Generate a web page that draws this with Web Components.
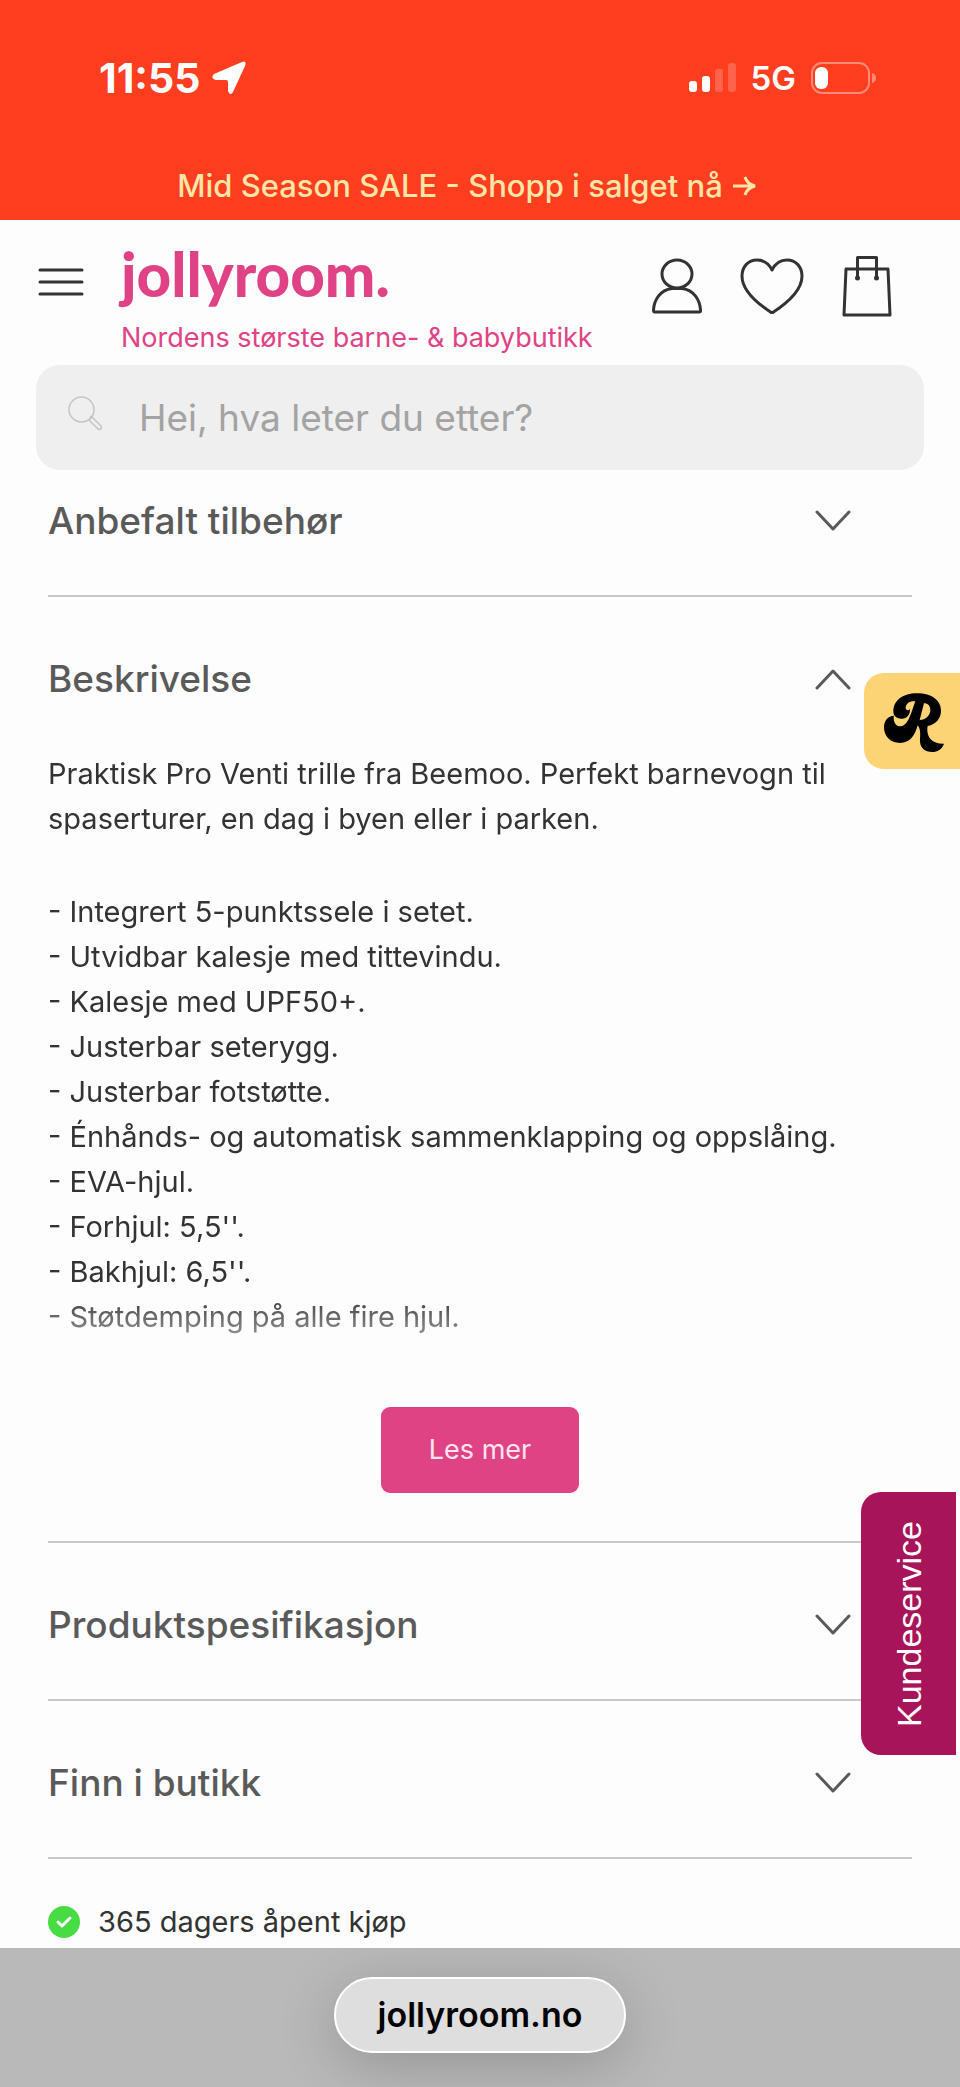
<!DOCTYPE html>
<html lang="no">
<head>
<meta charset="utf-8">
<meta name="viewport" content="width=device-width, initial-scale=1">
<title>Jollyroom</title>
<style>
  body {
    margin: 0;
    background: #fdfdfd;
    color: #333;
    font-family: Inter, "Liberation Sans", sans-serif;
    font-size: 29px;
    line-height: 45px;
  }
  main {
    /* the page is scrolled a little under the header */
    margin-top: -31px;
    padding: 0 48px;
  }
  p, ul {
    margin: 0;
  }
  ul {
    margin-top: 48px;
    padding: 0;
    list-style: none;
  }
</style>
</head>
<body>
  <status-bar time="11:55" network="5G"></status-bar>
  <sale-banner href="#salg">Mid Season SALE - Shopp i salget nå</sale-banner>
  <shop-header tagline="Nordens største barne- &amp; babybutikk"></shop-header>

  <main>
    <accordion-item heading="Anbefalt tilbehør"></accordion-item>
    <accordion-item heading="Beskrivelse" open>
      <read-more label="Les mer">
        <p>Praktisk Pro Venti trille fra Beemoo. Perfekt barnevogn til spaserturer, en dag i byen eller i parken.</p>
        <ul>
          <li>- Integrert 5-punktssele i setet.</li>
          <li>- Utvidbar kalesje med tittevindu.</li>
          <li>- Kalesje med UPF50+.</li>
          <li>- Justerbar seterygg.</li>
          <li>- Justerbar fotstøtte.</li>
          <li>- Énhånds- og automatisk sammenklapping og oppslåing.</li>
          <li>- EVA-hjul.</li>
          <li>- Forhjul: 5,5''.</li>
          <li>- Bakhjul: 6,5''.</li>
          <li>- Støtdemping på alle fire hjul.</li>
        </ul>
      </read-more>
    </accordion-item>
    <accordion-item heading="Produktspesifikasjon"></accordion-item>
    <accordion-item heading="Finn i butikk"></accordion-item>
    <usp-item>365 dagers åpent kjøp</usp-item>
  </main>

  <reward-tab></reward-tab>
  <service-tab>Kundeservice</service-tab>
  <address-bar>jollyroom.no</address-bar>

<script>
class StatusBar extends HTMLElement {
  constructor() {
    super();
    this.attachShadow({ mode: "open" });
  }

  connectedCallback() {
    this.shadowRoot.innerHTML = `
      <style>
        :host {
          display: flex;
          justify-content: space-between;
          align-items: center;
          padding: 54px 84px 0 99px;
          background: #ff3d1f;
          color: #fff;
          line-height: 48px;
        }
        div {
          display: flex;
          align-items: center;
        }
        .time {
          font-size: 41px;
          font-weight: 700;
          gap: 12px;
        }
        .signal {
          font-size: 33px;
          font-weight: 600;
          gap: 15px;
        }
      </style>
      <div class="time">
        <span>${this.getAttribute("time")}</span>
        <svg width="34" height="34" viewBox="0 0 34 34" fill="#fff"><path d="M30 1Q35 -1 33 5L21 31Q18 36 16 30V21Q16 19 14 19H4Q-2 17 2 13Z"/></svg>
      </div>
      <div class="signal">
        <svg width="47" height="30" viewBox="0 0 47 30" fill="#fff">
          <rect y="18" width="8" height="11" rx="3"/>
          <rect x="13" y="13" width="8" height="16" rx="3"/>
          <rect x="26" y="6" width="8" height="23" rx="3" opacity=".2"/>
          <rect x="39" y="0" width="8" height="29" rx="3" opacity=".2"/>
        </svg>
        <span>${this.getAttribute("network")}</span>
        <svg width="65" height="32" viewBox="0 0 65 32" fill="#fff">
          <rect x="1" y="1" width="57" height="30" rx="10" fill="none" stroke="#fff" stroke-width="2" opacity=".4"/>
          <path d="M61 11Q65 12 65 16T61 21Z" opacity=".4"/>
          <rect x="4" y="5" width="13" height="22" rx="6"/>
        </svg>
      </div>
    `;
  }
}
customElements.define("status-bar", StatusBar);

class SaleBanner extends HTMLElement {
  constructor() {
    super();
    this.attachShadow({ mode: "open" });
  }

  connectedCallback() {
    this.shadowRoot.innerHTML = `
      <style>
        :host {
          display: block;
          padding: 64px 26px 14px 0;
          background: #ff3d1f;
        }
        a {
          display: flex;
          align-items: center;
          justify-content: center;
          gap: 10px;
          color: #ffe5a6;
          font-size: 31px;
          font-weight: 500;
          line-height: 40px;
          text-decoration: none;
        }
      </style>
      <a href="${this.getAttribute("href")}">
        <slot></slot>
        <svg width="24" height="20" viewBox="0 0 24 20" fill="none" stroke="#ffe5a6" stroke-width="3"><path d="M0 10H21M12 1Q14 8 22 10Q14 12 12 19"/></svg>
      </a>
    `;
  }
}
customElements.define("sale-banner", SaleBanner);

class ShopHeader extends HTMLElement {
  constructor() {
    super();
    this.attachShadow({ mode: "open" });
  }

  connectedCallback() {
    this.shadowRoot.innerHTML = `
      <style>
        :host {
          display: block;
          position: relative;
          z-index: 1;
          padding: 22px 36px 0;
          background: #fdfdfd;
        }
        .row {
          display: flex;
          align-items: flex-start;
          padding-right: 32px;
        }
        button, .icons a {
          display: flex;
          align-items: center;
          height: 88px;
          padding: 0;
          border: none;
          background: none;
        }
        button {
          width: 85px;
          height: 80px;
          padding-left: 2px;
        }
        .brand {
          flex: 1;
          display: flex;
          flex-direction: column;
          gap: 16px;
          color: #df4386;
          white-space: nowrap;
        }
        .brand a {
          color: inherit;
          font: 900 60px/64px Lato, sans-serif;
          text-decoration: none;
        }
        .brand span {
          font-size: 27px;
          line-height: 32px;
        }
        .icons {
          display: flex;
          gap: 38px;
        }
        .search {
          display: flex;
          align-items: center;
          gap: 36px;
          height: 105px;
          margin-top: 11px;
          padding: 0 32px;
          border-radius: 24px;
          background: #efefef;
        }
        .search svg {
          margin-bottom: 8px;
        }
        input {
          flex: 1;
          min-width: 0;
          padding: 0;
          border: none;
          outline: none;
          background: none;
          font: 37px/48px Inter, sans-serif;
        }
        input::placeholder {
          color: #a3a3a3;
          opacity: 1;
        }
        .icons svg, button svg {
          fill: none;
          stroke: #333;
          stroke-width: 3;
          stroke-linejoin: round;
          stroke-linecap: round;
        }
      </style>
      <div class="row">
        <button aria-label="Meny">
          <svg width="46" height="28" viewBox="0 0 46 28"><path d="M2 2H44M2 14H44M2 26H44"/></svg>
        </button>
        <div class="brand">
          <a href="#">jollyroom.</a>
          <span>${this.getAttribute("tagline")}</span>
        </div>
        <nav class="icons">
          <a href="#konto" aria-label="Min konto">
            <svg width="50" height="56" viewBox="0 0 50 56"><ellipse cx="25" cy="16" rx="15" ry="14"/><path d="M20 30.500C8 32 2 42 1.500 52Q1.500 54 3 54H47Q49 54 48.500 52C48 42 42 32 30 30.500Z"/></svg>
          </a>
          <a href="#favoritter" aria-label="Favoritter">
            <svg width="64" height="56" viewBox="0 0 64 56"><path d="M32 12C29 6 24 2 17 2C8 2 2 9 2 18C2 33 18 46 32 55C46 46 62 33 62 18C62 9 56 2 47 2C40 2 35 6 32 12Z"/></svg>
          </a>
          <a href="#handlekurv" aria-label="Handlekurv">
            <svg width="50" height="62" viewBox="0 0 50 62"><path d="M4 14H46L48 60H2ZM15.500 23V2.500H34.500V23"/><g fill="#333" stroke="none"><circle cx="15.500" cy="23" r="2.500"/><circle cx="34.500" cy="23" r="2.500"/></g></svg>
          </a>
        </nav>
      </div>
      <label class="search">
        <svg width="35" height="35" viewBox="0 0 35 35" fill="none" stroke="#c4c4c4" stroke-width="1.500"><circle cx="13.500" cy="13.500" r="12.500"/><path d="M21 24L24 21L33 30Q34 32 33 33T30 33ZM22 20L24 22"/></svg>
        <input type="search" aria-label="Søk" placeholder="Hei, hva leter du etter?">
      </label>
    `;
  }
}
customElements.define("shop-header", ShopHeader);

class AccordionItem extends HTMLElement {
  constructor() {
    super();
    this.attachShadow({ mode: "open" });
  }

  connectedCallback() {
    this.shadowRoot.innerHTML = `
      <style>
        :host {
          display: block;
          border-bottom: 2px solid #c8c8c8;
        }
        h2 {
          margin: 0;
        }
        button {
          display: flex;
          justify-content: space-between;
          align-items: center;
          width: 100%;
          height: 156px;
          padding: 7px 61px 0 0;
          border: none;
          background: none;
          color: #5a5a5a;
          font: 500 37px/48px Inter, sans-serif;
          text-align: left;
          cursor: pointer;
        }
        svg {
          fill: none;
          stroke: #5a5a5a;
          stroke-width: 3;
          stroke-linecap: round;
          stroke-linejoin: round;
        }
        .panel {
          display: none;
        }
        :host([open]) .panel {
          display: block;
        }
        :host([open]) svg {
          transform: rotate(180deg);
        }
      </style>
      <h2>
        <button aria-expanded="${this.hasAttribute("open")}">
          ${this.getAttribute("heading")}
          <svg width="36" height="22" viewBox="0 0 36 22"><path d="M2 2L18 19L34 2"/></svg>
        </button>
      </h2>
      <div class="panel"><slot></slot></div>
    `;
    const button = this.shadowRoot.querySelector("button");
    button.addEventListener("click", () => {
      this.toggleAttribute("open");
      button.setAttribute("aria-expanded", this.hasAttribute("open"));
    });
  }
}
customElements.define("accordion-item", AccordionItem);

class ReadMore extends HTMLElement {
  constructor() {
    super();
    this.attachShadow({ mode: "open" });
  }

  connectedCallback() {
    this.shadowRoot.innerHTML = `
      <style>
        :host {
          display: flex;
          flex-direction: column;
          align-items: center;
          gap: 24px;
          margin-top: -2px;
          padding-bottom: 48px;
        }
        .text {
          width: 100%;
          padding-bottom: 44px;
          -webkit-mask-image: linear-gradient(#000 calc(100% - 90px), transparent);
          mask-image: linear-gradient(#000 calc(100% - 90px), transparent);
        }
        button {
          padding: 23px 48px;
          border: none;
          border-radius: 9px;
          background: #e04384;
          color: #ffe4f0;
          font: 27px/40px Inter, sans-serif;
          cursor: pointer;
        }
      </style>
      <div class="text"><slot></slot></div>
      <button>${this.getAttribute("label")}</button>
    `;
  }
}
customElements.define("read-more", ReadMore);

class UspItem extends HTMLElement {
  constructor() {
    super();
    this.attachShadow({ mode: "open" });
  }

  connectedCallback() {
    this.shadowRoot.innerHTML = `
      <style>
        :host {
          display: flex;
          align-items: center;
          gap: 18px;
          padding: 40px 0 4px;
        }
      </style>
      <svg width="32" height="32" viewBox="0 0 32 32"><circle cx="16" cy="16" r="16" fill="#48dc44"/><path d="M10 16L14 20L22 12" fill="none" stroke="#fff" stroke-width="3" stroke-linecap="round" stroke-linejoin="round"/></svg>
      <span><slot></slot></span>
    `;
  }
}
customElements.define("usp-item", UspItem);

class RewardTab extends HTMLElement {
  constructor() {
    super();
    this.attachShadow({ mode: "open" });
  }

  connectedCallback() {
    this.shadowRoot.innerHTML = `
      <style>
        :host {
          position: fixed;
          top: 673px;
          right: 0;
          z-index: 2;
        }
        button {
          display: flex;
          align-items: center;
          justify-content: center;
          box-sizing: border-box;
          width: 96px;
          height: 96px;
          padding: 2px 0 0 4px;
          border: none;
          border-radius: 20px 0 0 20px;
          background: #fdd475;
          cursor: pointer;
        }
      </style>
      <button aria-label="Fordeler">
        <svg width="60" height="59" viewBox="310 159 180 177"><path fill-rule="evenodd" d="M338 215C338 180 368 160 408 160C455 160 481 182 481 212C481 236 466 252 441 258C436 285 448 312 490 311C484 328 470 336 455 336C430 336 416 322 418 296C419 280 420 268 411 256C404 285 388 309 358 309C328 309 310 288 310 262C310 242 322 227 340 227C336 243 345 260 360 259C384 257 392 215 404 184C388 182 375 190 375 205C378 213 384 212 388 207C389 225 378 236 365 236C349 236 338 228 338 215ZM430 190L417 240C435 240 449 226 449 210C449 198 442 190 430 190Z"/></svg>
      </button>
    `;
  }
}
customElements.define("reward-tab", RewardTab);

class ServiceTab extends HTMLElement {
  constructor() {
    super();
    this.attachShadow({ mode: "open" });
  }

  connectedCallback() {
    this.shadowRoot.innerHTML = `
      <style>
        :host {
          position: fixed;
          top: 1492px;
          right: 4px;
          z-index: 2;
        }
        button {
          width: 95px;
          height: 263px;
          padding: 0;
          border: none;
          border-radius: 0 20px 20px 0;
          background: #a81459;
          color: #fff;
          font: 34px/40px "Liberation Sans", Arial, sans-serif;
          writing-mode: vertical-rl;
          /* reads from bottom to top */
          transform: rotate(180deg);
          cursor: pointer;
        }
      </style>
      <button><slot></slot></button>
    `;
  }
}
customElements.define("service-tab", ServiceTab);

class AddressBar extends HTMLElement {
  constructor() {
    super();
    this.attachShadow({ mode: "open" });
  }

  connectedCallback() {
    this.shadowRoot.innerHTML = `
      <style>
        :host {
          display: flex;
          justify-content: center;
          padding: 29px 0 34px;
          background: #b9b9b9;
          overflow: hidden;
        }
        button {
          padding: 16px 42px;
          border: 2px solid #fff;
          border-radius: 38px;
          background: #dedede;
          box-shadow: 0 12px 60px rgba(0, 0, 0, 0.2);
          color: #000;
          font: 600 34px/40px Inter, sans-serif;
        }
      </style>
      <button><slot></slot></button>
    `;
  }
}
customElements.define("address-bar", AddressBar);
</script>
</body>
</html>
